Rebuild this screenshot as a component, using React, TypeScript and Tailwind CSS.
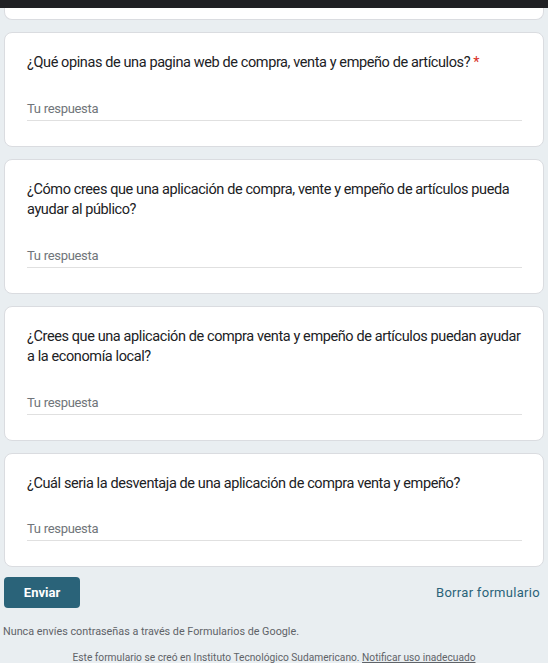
const questions = [
  {
    text: "¿Qué opinas de una pagina web de compra, venta y empeño de artículos?",
    required: true,
  },
  {
    text: "¿Cómo crees que una aplicación de compra, vente y empeño de artículos pueda ayudar al público?",
  },
  {
    text: "¿Crees que una aplicación de compra venta y empeño de artículos puedan ayudar a la economía local?",
  },
  {
    text: "¿Cuál seria la desventaja de una aplicación de compra venta y empeño?",
  },
];

function QuestionCard({ text, required }: { text: string; required?: boolean }) {
  return (
    <div className="bg-white rounded-lg border border-[#dadce0] pl-[22px] pr-[16px] pt-[20px] pb-[25px]">
      <div className="text-[14.5px] leading-[20.5px] tracking-[-0.4px] text-[#202124]">
        {text}
        {required && <span className="text-[#d93025]"> *</span>}
      </div>
      <div className="mt-[24px] mr-[5px] border-b border-[#e0e0e0] text-[13px] leading-[22px] tracking-[-0.3px] text-[#70757a]">
        Tu respuesta
      </div>
    </div>
  );
}

export default function App() {
  return (
    <div
      className="min-h-[663px] w-[548px] bg-[#e9eef1] overflow-hidden"
      style={{ fontFamily: "Roboto, 'Liberation Sans', sans-serif" }}
    >
      {/* top strip */}
      <div className="h-[8px] bg-[#202124]" />

      <div className="flex flex-col gap-[12px] px-[4px]">
        {/* tail of the previous card */}
        <div className="h-[12px] bg-white rounded-b-lg border border-t-0 border-[#dadce0]" />

        {questions.map((q, i) => (
          <QuestionCard key={i} text={q.text} required={q.required} />
        ))}
      </div>

      {/* actions */}
      <div className="flex items-center justify-between px-[4px] mt-[10px]">
        <button className="bg-[#2a6379] text-white text-[13px] font-bold w-[76px] h-[31px] rounded">
          Enviar
        </button>
        <button className="text-[#2a6379] text-[13px] tracking-[0.3px] pr-[4px]">
          Borrar formulario
        </button>
      </div>

      <div className="mt-[16px] px-[3px] text-[10.8px] leading-[16px] text-[#5f6368]">
        Nunca envíes contraseñas a través de Formularios de Google.
      </div>

      <div className="mt-[10px] text-center text-[10.2px] leading-[16px] text-[#5f6368]">
        Este formulario se creó en Instituto Tecnológico Sudamericano.{" "}
        <span className="underline">Notificar uso inadecuado</span>
      </div>
    </div>
  );
}
